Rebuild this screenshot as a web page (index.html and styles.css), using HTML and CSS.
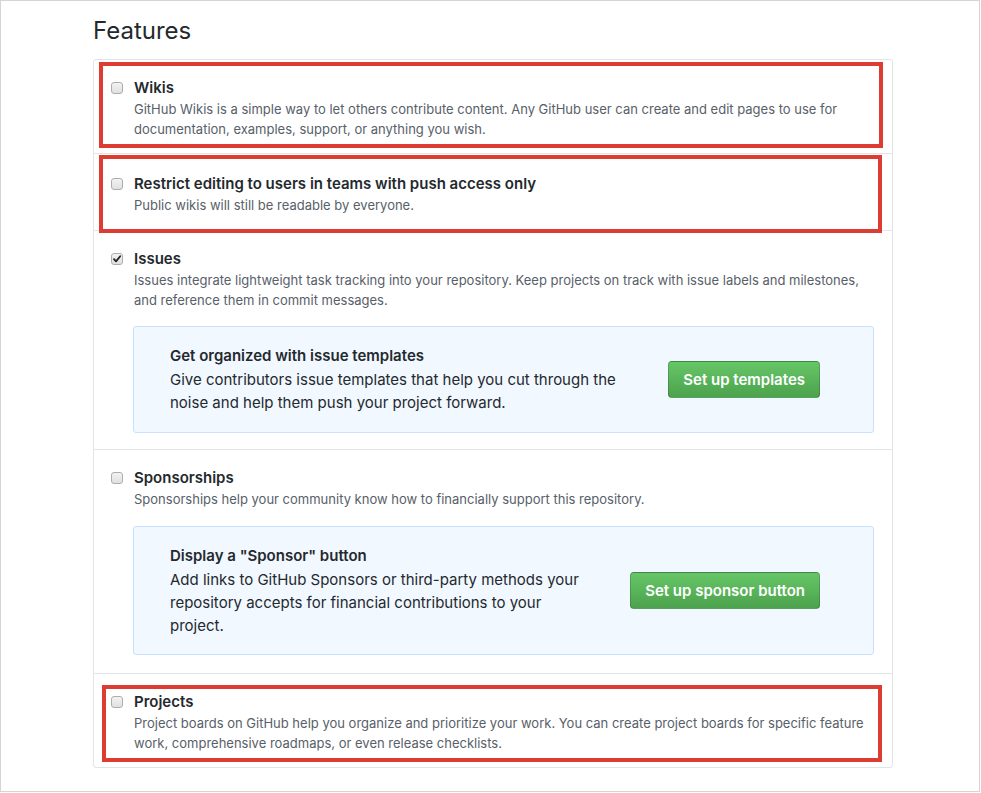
FILE: index.html
```html
<!DOCTYPE html>
<html lang="en">
<head>
<meta charset="utf-8">
<title>Features</title>
<link rel="stylesheet" href="styles.css">
</head>
<body>
<div class="frame">
  <div class="content">
    <h2 class="heading">Features</h2>
    <div class="box">
      <div class="row row-first">
        <span class="cb"></span>
        <div class="body">
          <div class="title">Wikis</div>
          <p class="note">GitHub Wikis is a simple way to let others contribute content. Any GitHub user can create and edit pages to use for documentation, examples, support, or anything you wish.</p>
        </div>
      </div>
      <div class="row row-restrict">
        <span class="cb"></span>
        <div class="body">
          <div class="title">Restrict editing to users in teams with push access only</div>
          <p class="note">Public wikis will still be readable by everyone.</p>
        </div>
      </div>
      <div class="row row-issues">
        <span class="cb checked"><svg viewBox="0 0 12 12" width="12" height="12"><path d="M3 6.2 L5 8.4 L9.2 3.2" fill="none" stroke="#222" stroke-width="1.8" stroke-linecap="round" stroke-linejoin="round"/></svg></span>
        <div class="body">
          <div class="title">Issues</div>
          <p class="note">Issues integrate lightweight task tracking into your repository. Keep projects on track with issue labels and milestones, and reference them in commit messages.</p>
          <div class="promo promo-issues">
            <div class="promo-text">
              <div class="promo-title">Get organized with issue templates</div>
              <p class="promo-desc">Give contributors issue templates that help you cut through the noise and help them push your project forward.</p>
            </div>
            <button class="btn" type="button">Set up templates</button>
          </div>
        </div>
      </div>
      <div class="row row-sponsor">
        <span class="cb"></span>
        <div class="body">
          <div class="title">Sponsorships</div>
          <p class="note">Sponsorships help your community know how to financially support this repository.</p>
          <div class="promo promo-tall">
            <div class="promo-text">
              <div class="promo-title">Display a "Sponsor" button</div>
              <p class="promo-desc">Add links to GitHub Sponsors or third-party methods your repository accepts for financial contributions to your project.</p>
            </div>
            <button class="btn" type="button">Set up sponsor button</button>
          </div>
        </div>
      </div>
      <div class="row row-last">
        <span class="cb"></span>
        <div class="body">
          <div class="title">Projects</div>
          <p class="note">Project boards on GitHub help you organize and prioritize your work. You can create project boards for specific feature work, comprehensive roadmaps, or even release checklists.</p>
        </div>
      </div>
    </div>
  </div>
  <div class="mark mark-1"></div>
  <div class="mark mark-2"></div>
  <div class="mark mark-3"></div>
</div>
</body>
</html>
```
FILE: styles.css
```css
* { box-sizing: border-box; }
html, body { margin: 0; padding: 0; background: #fff; }
body {
  font-family: Inter, "Liberation Sans", Arial, sans-serif;
  color: #24292e;
}
.frame {
  position: relative;
  width: 980px;
  height: 792px;
  border: 1px solid #d5d5d5;
  background: #fff;
}
.content {
  margin-left: 92px;
  width: 800px;
  padding-top: 15px;
}
.heading {
  margin: 0 0 13px 0;
  font-size: 24px;
  line-height: 30px;
  font-weight: 400;
  color: #24292e;
}
.box {
  border: 1px solid #e1e4e8;
  border-radius: 3px;
}
.row {
  display: grid;
  grid-template-columns: 12px 1fr;
  column-gap: 11px;
  padding: 17px 18px 15px 17px;
  border-top: 1px solid #e1e4e8;
}
.row-first { border-top: 0; padding-bottom: 14px; }
.row-restrict { padding-top: 19px; }
.row-issues { padding-bottom: 16px; }
.row-sponsor { padding-top: 17px; padding-bottom: 18px; }
.row-last { padding-top: 17px; padding-bottom: 14px; }
.cb {
  width: 12px;
  height: 12px;
  margin-top: 5px;
  border: 1px solid #adadad;
  border-radius: 3px;
  background: linear-gradient(#f2f2f2, #e0e0e0);
  display: block;
  position: relative;
}
.cb svg { position: absolute; left: -1px; top: -1px; }
.title {
  font-size: 15px;
  line-height: 22px;
  font-weight: 600;
  color: #24292e;
}
.note {
  margin: 0;
  font-size: 13px;
  line-height: 20px;
  color: #586069;
}
.promo {
  margin: 16px 0 0 -1px;
  display: flex;
  align-items: center;
  border: 1px solid #c8e1ff;
  border-radius: 3px;
  background: #f1f8ff;
  padding: 17px 53px 17px 36px;
}
.promo-issues { padding-bottom: 18px; }
.promo-tall { margin-top: 17px; }
.promo-text { flex: 1; margin-right: 40px; }
.promo-title {
  font-size: 15px;
  line-height: 24px;
  font-weight: 600;
  color: #24292e;
}
.promo-desc {
  margin: 0;
  font-size: 15px;
  line-height: 23px;
  color: #24292e;
}
.btn {
  flex: none;
  height: 37px;
  padding: 0 14px;
  font-family: inherit;
  font-size: 15px;
  font-weight: 600;
  color: #fff;
  border: 1px solid rgba(27, 31, 35, 0.2);
  border-radius: 4px;
  background: linear-gradient(#66c667, #4ca24d);
}
.mark {
  position: absolute;
  border: 4px solid #dd3c32;
  pointer-events: none;
}
.mark-1 { left: 98px; top: 61px; width: 784px; height: 86px; }
.mark-2 { left: 98px; top: 154px; width: 783px; height: 78px; }
.mark-3 { left: 101px; top: 684px; width: 780px; height: 77px; }
```
